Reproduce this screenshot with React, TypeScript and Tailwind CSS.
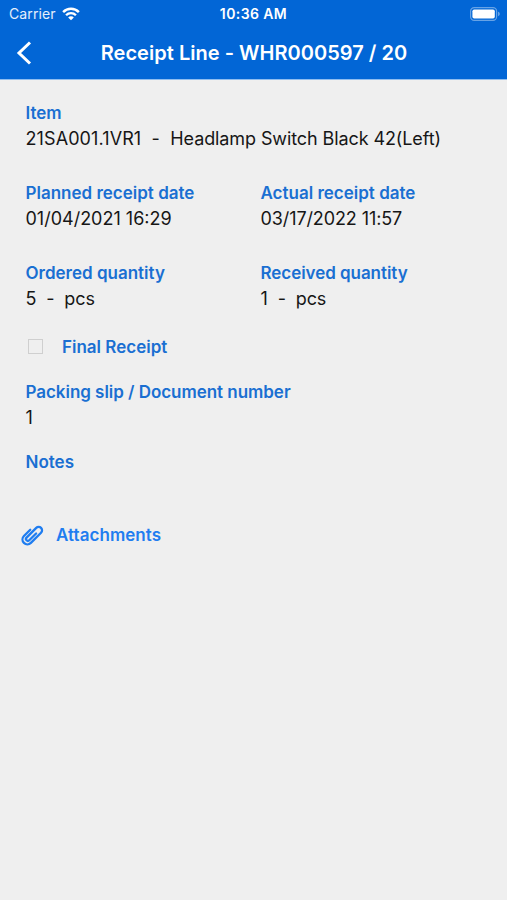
import type { ReactNode } from "react";

type FieldProps = {
  label: string;
  labelClass?: string;
  valueClass?: string;
  children?: ReactNode;
};

function Field({
  label,
  labelClass = "",
  valueClass = "",
  children,
}: FieldProps) {
  return (
    <div className="leading-[26px] whitespace-pre">
      <p className={`text-[17px] font-semibold text-[#1a6fd2] ${labelClass}`}>
        {label}
      </p>
      {children && (
        <p className={`text-[18px] text-[#161616] ${valueClass}`}>{children}</p>
      )}
    </div>
  );
}

function WifiIcon() {
  return (
    <svg width="18" height="14" viewBox="0 0 19 14" fill="none">
      <path d="M1.2 5a11.7 11.7 0 0 1 16.6 0" stroke="white" strokeWidth="2.6" />
      <path d="M4.3 8.3a7.3 7.3 0 0 1 10.4 0" stroke="white" strokeWidth="2.5" />
      <path d="M9.5 13.7 6.5 10.7a4.2 4.2 0 0 1 6 0Z" fill="white" />
    </svg>
  );
}

function BatteryIcon() {
  return (
    <svg width="31" height="14" viewBox="0 0 31 14" fill="none">
      <rect x="0.6" y="0.6" width="26" height="12.8" rx="3.6" stroke="#fff" strokeOpacity="0.4" strokeWidth="1.2" />
      <rect x="2.4" y="2.4" width="22.4" height="9.2" rx="1.8" fill="#fff" />
      <path d="M28 4.8c1.2.3 1.8 1.2 1.8 2.2S29.2 8.9 28 9.2Z" fill="#fff" fillOpacity="0.4" />
    </svg>
  );
}

function PaperclipIcon() {
  return (
    <svg width="24" height="24" viewBox="0 0 24 24" fill="none">
      <g
        transform="rotate(45 12 12)"
        stroke="#1f7df0"
        strokeWidth="2.3"
        strokeLinecap="round"
        strokeLinejoin="round"
      >
        <path d="M7 9.500V18.400a4.900 4.900 0 0 0 9.800 0V4a3.400 3.400 0 0 0-6.800 0V17.700a1.900 1.900 0 0 0 3.800 0V8" />
      </g>
    </svg>
  );
}

export default function App() {
  return (
    <div className="flex h-[900px] w-[507px] flex-col bg-[#efefef] font-['Inter','Liberation_Sans',sans-serif]">
      <header className="h-[80px] border-b border-[#8fbdf0] bg-[#0266d6] text-white">
        <div className="grid h-[27px] grid-cols-3 items-center pr-[6px] pl-[9px]">
          <div className="flex items-center gap-[6px] text-[14px] tracking-[0.1px] text-white/90">
            <span>Carrier</span>
            <WifiIcon />
          </div>
          <span className="-ml-[3px] text-center text-[14px] font-semibold tracking-[0.4px]">
            10:36 AM
          </span>
          <div className="flex justify-end">
            <BatteryIcon />
          </div>
        </div>
        <div className="grid h-[52px] grid-cols-[61px_1fr_60px] items-center">
          <svg className="-mt-[1px] ml-[16px]" width="16" height="24" viewBox="0 0 16 24" fill="none">
            <path d="M14 1.5 3 12 14 22.5" stroke="white" strokeWidth="3" />
          </svg>
          <h1 className="-mt-px text-center text-[20px] font-semibold tracking-[0.03px] whitespace-nowrap">
            Receipt Line - WHR000597 / 20
          </h1>
        </div>
      </header>

      <main className="flex flex-col pt-[20px] pl-[25.5px]">
        <Field label="Item">
          <span className="tracking-[0.1px]">{"21SA001.1VR1  -  "}</span>
          <span className="tracking-[-0.1px]">
            Headlamp Switch Black 42(Left)
          </span>
        </Field>

        <div className="mt-[28px] grid grid-cols-[235px_1fr] gap-y-[28px]">
          <Field label="Planned receipt date">01/04/2021 16:29</Field>
          <Field label="Actual receipt date" valueClass="tracking-[-0.1px]">
            03/17/2022 11:57
          </Field>
          <Field label="Ordered quantity" valueClass="tracking-[-0.1px]">
            {"5  -  pcs"}
          </Field>
          <Field
            label="Received quantity"
            labelClass="tracking-[-0.05px]"
            valueClass="tracking-[-0.1px]"
          >
            {"1  -  pcs"}
          </Field>
        </div>

        <label className="mt-[22px] mb-[19px] flex items-center">
          <span className="mb-[2px] ml-[2px] size-[15px] border border-[#cfcfcf]" />
          <span className="ml-[19.5px] text-[17px] leading-[26px] font-semibold text-[#1a6fd2]">
            Final Receipt
          </span>
        </label>

        <Field
          label="Packing slip / Document number"
          labelClass="tracking-[-0.04px]"
        >
          1
        </Field>

        <div className="mt-[18px]">
          <Field label="Notes" />
        </div>

        <button className="mt-[47px] -ml-[6px] flex items-center gap-[12.5px] text-[17px] leading-[26px] font-semibold tracking-[0.05px] text-[#1f7df0]">
          <PaperclipIcon />
          <span>Attachments</span>
        </button>
      </main>
    </div>
  );
}
